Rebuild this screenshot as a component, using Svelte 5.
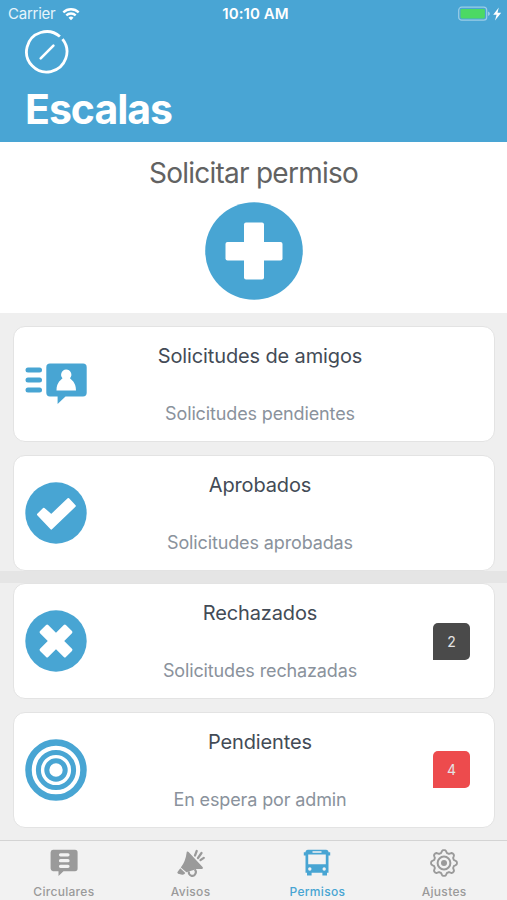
<script>
	const cards = [
		{ icon: 'friends', title: 'Solicitudes de amigos', text: 'Solicitudes pendientes' },
		{ icon: 'check', title: 'Aprobados', text: 'Solicitudes aprobadas' },
		{ icon: 'cross', title: 'Rechazados', text: 'Solicitudes rechazadas', badge: 2, tone: 'dark' },
		{ icon: 'target', title: 'Pendientes', text: 'En espera por admin', badge: 4, tone: 'red' }
	];

	const tabs = [
		{ icon: 'news', label: 'Circulares' },
		{ icon: 'horn', label: 'Avisos' },
		{ icon: 'bus', label: 'Permisos' },
		{ icon: 'gear', label: 'Ajustes' }
	];

	let active = 'Permisos';

	// outline of the settings gear: eight rounded teeth
	function gearPath(cx, cy, r, depth) {
		let d = '';
		for (let i = 0; i <= 96; i++) {
			const a = (i / 96) * Math.PI * 2;
			const wave = Math.max(-1, Math.min(1, Math.cos(a * 8) * 1.5));
			const rad = r + depth * wave;
			d += (i ? 'L' : 'M') + (cx + rad * Math.sin(a)).toFixed(2) + ' ' + (cy - rad * Math.cos(a)).toFixed(2);
		}
		return d + 'Z';
	}
</script>

<div class="screen">
	<header>
		<div class="status">
			<span class="carrier">
				Carrier
				<svg width="18" height="14" viewBox="0 0 18 14" fill="none" stroke="#fff" stroke-width="2.3">
					<path d="M1.3 5.3a11.2 11.2 0 0 1 15.4 0" />
					<path d="M4.3 8.4a6.8 6.8 0 0 1 9.4 0" />
					<path d="M9 13.2l-2.5-2.5a3.6 3.6 0 0 1 5 0z" fill="#fff" stroke="none" />
				</svg>
			</span>
			<span class="time">10:10 AM</span>
			<svg class="battery" width="44" height="16" viewBox="0 0 44 16">
				<rect x="0.7" y="1.2" width="28" height="13" rx="3" fill="none" stroke="#9bcde6" stroke-width="1.2" />
				<rect x="2.5" y="3" width="24.4" height="9.4" rx="1.4" fill="#4cd964" />
				<path d="M30 5.6q2 .8 2 2.2t-2 2.2z" fill="#9bcde6" />
				<path d="M40.8 1.6L35.2 8.8h3.4l-1.6 5.6 6.2-7.6h-3.700z" fill="#fff" />
			</svg>
		</div>
		<svg class="compass" width="44" height="44" viewBox="0 0 44 44" fill="none" stroke="#fff">
			<path d="M34.9 6.500A20.200 20.200 0 1 0 37.500 9.200" stroke-width="2.800" />
			<path d="M15.700 28.300L28.400 15.600" stroke-width="2.600" stroke-linecap="round" />
		</svg>
		<h1>Escalas</h1>
	</header>

	<section class="request">
		<h2>Solicitar permiso</h2>
		<svg width="98" height="98" viewBox="0 0 98 98">
			<circle cx="49" cy="49" r="48.8" fill="#48a5d3" />
			<rect x="39" y="20.5" width="20" height="57" rx="2" fill="#fff" />
			<rect x="20.5" y="40" width="57" height="18.6" rx="2" fill="#fff" />
		</svg>
	</section>

	<main>
		{#each cards as card, i}
			{#if i === 2}
				<div class="divider"></div>
			{/if}
			<article class="card">
				<svg width="62" height="62" viewBox="0 0 62 62" fill="#48a5d3">
					{#if card.icon === 'friends'}
						<rect x="0.5" y="14.5" width="16.5" height="5" rx="2.5" />
						<rect x="0.5" y="24.5" width="16.5" height="5" rx="2.5" />
						<rect x="0.5" y="34.5" width="16.5" height="5" rx="2.5" />
						<path d="M25 10.500h33a3.700 3.700 0 0 1 3.700 3.700v25.600A3.700 3.700 0 0 1 58 43.500H40.500L32.600 51V43.500H25a3.700 3.700 0 0 1-3.700-3.700V14.200A3.700 3.700 0 0 1 25 10.500z" />
						<path d="M41 16.500a5.200 5.200 0 0 1 4 8.700c.8 1.400 6 3.500 6 12.300H31.500c0-8.800 5.200-10.900 6-12.300A5.200 5.200 0 0 1 41 16.500z" fill="#fff" />
					{:else if card.icon === 'check'}
						<circle cx="31" cy="31" r="30.7" />
						<path d="M13 32.500L18.800 26.700L26.300 33.200L43.300 17L49.800 24L26.300 46.600Z" fill="#fff" stroke="#fff" stroke-width="2" stroke-linejoin="round" />
					{:else if card.icon === 'cross'}
						<circle cx="31" cy="31" r="30.7" />
						<g fill="#fff" transform="rotate(45 31 31)">
							<rect x="25.2" y="12.7" width="11.6" height="36.6" rx="1.5" />
							<rect x="12.7" y="25.2" width="36.6" height="11.6" rx="1.5" />
						</g>
					{:else}
						<g fill="none" stroke="#48a5d3">
							<circle cx="31" cy="31" r="27.5" stroke-width="6.5" />
							<circle cx="31" cy="31" r="17.6" stroke-width="5" />
							<circle cx="31" cy="31" r="9.2" stroke-width="5" />
						</g>
					{/if}
				</svg>
				<div class="info">
					<h3>{card.title}</h3>
					<p>{card.text}</p>
				</div>
				{#if card.badge}
					<span class="badge {card.tone}">{card.badge}</span>
				{/if}
			</article>
		{/each}
	</main>

	<nav>
		{#each tabs as tab}
			<a href="#{tab.icon}" class:active={tab.label === active}>
				<svg width="28" height="28" viewBox="0 0 28 28" fill="currentColor">
					{#if tab.icon === 'news'}
						<path d="M3 .8h22a2.600 2.600 0 0 1 2.600 2.600v16.200a2.600 2.600 0 0 1-2.600 2.600H13.500L8.500 27v-4.800H3A2.600 2.600 0 0 1 .6 19.600V3.400A2.600 2.600 0 0 1 3 .8z" />
						<path d="M10.500 5.800H18M10.500 11.700H18M10.500 17.300H18" stroke="#f2f2f2" stroke-width="3.200" stroke-linecap="round" />
					{:else if tab.icon === 'horn'}
						<path d="M9.800 2.800q1-.8 1.800.3L25.800 18.200q.7 1.500-1 1.700l-5 .2-10.400 3.200L3.800 18.500Q8.500 13 9.800 2.800z" />
						<path d="M3.300 19.200L8.300 24q-1 2-3.200 1.700l-4-1q-1.300-.8-.4-2z" />
						<path d="M12 22.500a3.400 3.400 0 0 0 6.500 2 3.400 3.400 0 0 0-.8-4" fill="none" stroke="currentColor" stroke-width="2.200" />
						<path d="M18 6.500l1.700-4.500M21 9l3.500-5M23.500 11.200l3.300-2.400" stroke="currentColor" stroke-width="2.200" stroke-linecap="round" />
					{:else if tab.icon === 'bus'}
						<path fill-rule="evenodd" d="M5 .8h18a2.500 2.500 0 0 1 2.500 2.500h1.700v3.200h-1.700v17.300H24v2.700h-4.600v-2.700H8.600v2.700H4v-2.700H2.500V6.500H.8V3.300h1.700A2.500 2.500 0 0 1 5 .8zM5.200 5.500v9.800h17.600V5.500zM9.500 2.200v1.600h9V2.200z" />
						<circle cx="6.800" cy="20" r="1.700" fill="#f2f2f2" />
						<circle cx="21.200" cy="20" r="1.700" fill="#f2f2f2" />
					{:else}
						<path d={gearPath(14, 14, 11.6, 1.3)} fill="none" stroke="currentColor" stroke-width="1.9" stroke-linejoin="round" />
						<circle cx="14" cy="14" r="6.4" fill="none" stroke="currentColor" stroke-width="2" />
						<circle cx="14" cy="14" r="3" />
					{/if}
				</svg>
				<span>{tab.label}</span>
			</a>
		{/each}
	</nav>
</div>

<style>
	:global(body) {
		margin: 0;
		background: #efefef;
	}

	.screen {
		display: flex;
		flex-direction: column;
		width: 507px;
		height: 900px;
		overflow: hidden;
		background: #efefef;
		font-family: Inter, 'Liberation Sans', sans-serif;
	}

	svg {
		display: block;
		flex: none;
	}

	h1,
	h2,
	h3,
	p {
		margin: 0;
		white-space: nowrap;
	}

	header {
		flex: none;
		box-sizing: border-box;
		height: 142px;
		background: #49a5d4;
		color: #fff;
	}

	.status {
		display: grid;
		grid-template-columns: 1fr auto 1fr;
		align-items: center;
		height: 27px;
		padding: 0 5px 0 8px;
		font-size: 15px;
	}

	.carrier {
		display: flex;
		align-items: center;
		gap: 7px;
		letter-spacing: -0.25px;
		color: #e6f4fb;
	}

	.time {
		font-weight: 600;
		font-size: 15px;
		letter-spacing: 0.1px;
		padding-left: 1px;
	}

	.battery {
		justify-self: end;
	}

	.compass {
		margin: 3px 0 0 25px;
	}

	h1 {
		margin: 14px 0 0 25px;
		font-size: 41px;
		line-height: 42px;
		font-weight: 700;
		letter-spacing: -1px;
	}

	.request {
		display: flex;
		flex: none;
		flex-direction: column;
		align-items: center;
		box-sizing: border-box;
		height: 171px;
		padding-top: 13px;
		background: #fff;
	}

	h2 {
		margin-bottom: 11px;
		color: #626262;
		font-size: 28px;
		line-height: 36px;
		font-weight: 400;
		letter-spacing: -0.75px;
	}

	main {
		display: flex;
		flex: none;
		flex-direction: column;
		box-sizing: border-box;
		height: 527px;
		padding-top: 13px;
	}

	.card {
		display: flex;
		flex: none;
		align-items: center;
		box-sizing: border-box;
		height: 116px;
		margin: 0 12px 12.5px 13px;
		padding: 0 23px 0 11px;
		border: 1px solid #e3e3e3;
		border-radius: 12px;
		background: #fff;
	}

	.divider {
		flex: none;
		height: 12.5px;
		margin-top: -12.5px;
		background: #e5e5e5;
	}

	.info {
		display: flex;
		flex: none;
		flex-direction: column;
		gap: 30px;
		width: 346px;
		padding-top: 2px;
		text-align: center;
	}

	h3 {
		color: #434b56;
		font-size: 20px;
		line-height: 28px;
		font-weight: 400;
		letter-spacing: -0.13px;
	}

	p {
		color: #8a929c;
		font-size: 18px;
		line-height: 28px;
		letter-spacing: -0.13px;
	}

	.badge {
		display: flex;
		align-items: center;
		justify-content: center;
		width: 37px;
		height: 37px;
		border-radius: 5px 5px 5px 0;
		color: #e4e4e4;
		font-size: 14px;
	}

	.dark {
		background: #4a4a4a;
	}

	.red {
		background: #ed4b4d;
	}

	nav {
		display: grid;
		grid-template-columns: repeat(4, 1fr);
		flex: none;
		box-sizing: border-box;
		height: 60px;
		border-top: 1px solid #d4d4d4;
		background: #f2f2f2;
	}

	a {
		display: flex;
		flex-direction: column;
		align-items: center;
		padding: 8px 0 0 1px;
		color: #9a9a9a;
		font-size: 12px;
		line-height: 16px;
		font-weight: 500;
		letter-spacing: 0.3px;
		text-decoration: none;
	}

	a span {
		margin-top: 7px;
	}

	.active {
		color: #48a5d3;
	}
</style>
